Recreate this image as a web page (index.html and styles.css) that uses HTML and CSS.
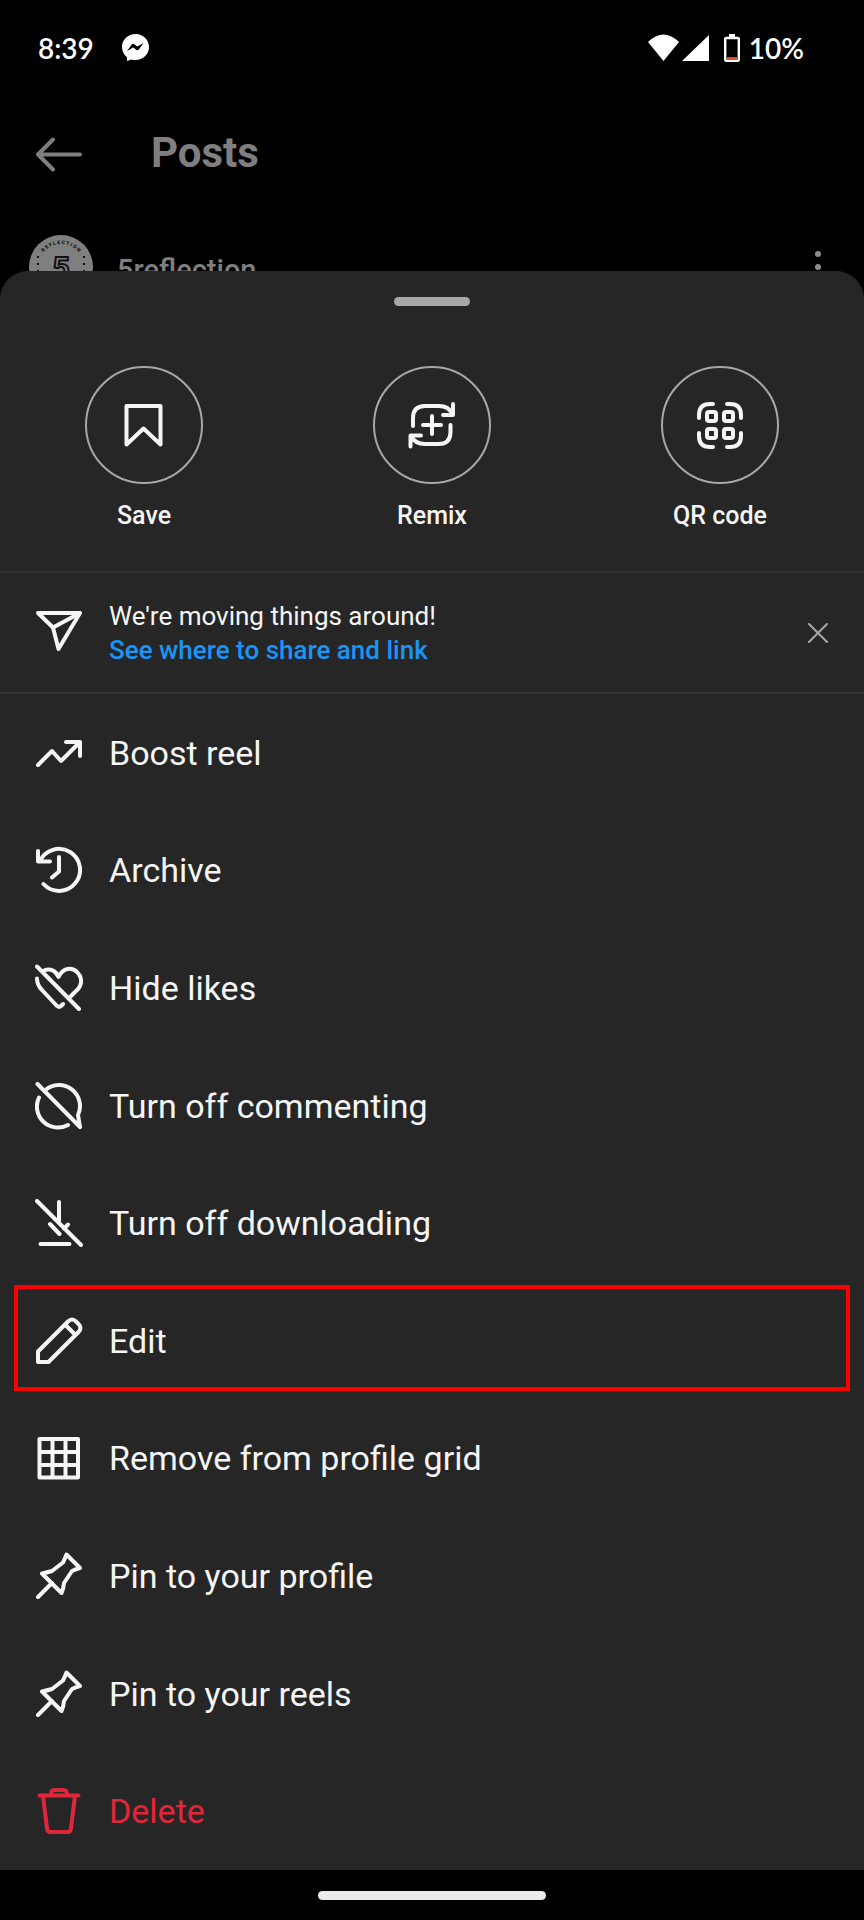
FILE: index.html
```html
<!DOCTYPE html>
<html lang="en">
<head>
  <meta charset="UTF-8">
  <meta name="viewport" content="width=device-width, initial-scale=1.0">
  <title>Posts</title>
  <link rel="stylesheet" href="styles.css">
</head>
<body>
  <div class="status-bar">
    <span class="time">8:39</span>
    <svg class="messenger" viewBox="0 0 27 27" aria-hidden="true">
      <path fill="#fff" d="M13.500 0C21 0 27 5.600 27 13S21 26 13.500 26c-1.500 0-2.800-.2-4-.6L5 27v-3.800C1.900 20.800 0 17.200 0 13 0 5.600 6 0 13.500 0z"/>
      <path fill="#000" d="M5 17l4.500-6.300q1.200-1.500 2.800-.4l3 2.300 6.200-3.600-4.500 6.300q-1.200 1.500-2.800.4l-3-2.300z"/>
    </svg>
    <div class="status-icons">
      <svg width="31" height="28" viewBox="0 0 31 28" aria-hidden="true"><path fill="#fff" d="M0 8Q15.500-7 31 8L15.500 27z"/></svg>
      <svg width="27" height="28" viewBox="0 0 27 28" aria-hidden="true"><path fill="#fff" d="M27 1v26H0z"/></svg>
      <svg class="battery" width="16" height="28" viewBox="0 0 16 28" aria-hidden="true">
        <path fill="#fff" d="M5 0h6v4H5z"/>
        <rect x="1.200" y="4" width="13.600" height="22.800" rx="1" fill="none" stroke="#fff" stroke-width="2.400"/>
        <path fill="#f0432f" d="M3 23h10v2.500H3z"/>
      </svg>
      <span>10%</span>
    </div>
  </div>

  <header class="app-bar">
    <button class="back" aria-label="Back">
      <svg class="icon" viewBox="0 0 48 48"><path d="M18 11.500L3 26.500l15 15M3 26.500h42"/></svg>
    </button>
    <h1>Posts</h1>
  </header>

  <div class="post">
    <svg class="avatar" viewBox="0 0 64 64" aria-hidden="true">
      <circle cx="32" cy="32" r="32" fill="#7f7f7f"/>
      <path id="ring" fill="none" d="M9 32a23 23 0 0 1 46 0"/>
      <path fill="none" stroke="#111" stroke-width="2" stroke-dasharray="2 5" d="M9 37V18M55 37V18"/>
      <text class="avatar-ring"><textPath href="#ring" startOffset="50%" text-anchor="middle">R E F L E C T I O N</textPath></text>
      <text class="avatar-five" x="32" y="43" text-anchor="middle">5</text>
    </svg>
    <span class="username">5reflection</span>
    <button class="more" aria-label="More options">
      <svg width="8" height="34" viewBox="0 0 8 34"><circle cx="4" cy="4" r="3"/><circle cx="4" cy="17" r="3"/><circle cx="4" cy="30" r="3"/></svg>
    </button>
  </div>

  <main class="sheet">
    <div class="handle"></div>

    <div class="actions">
      <button class="action">
        <span class="circle"><svg class="icon" viewBox="0 0 48 48"><path d="M6.500 5h34v38.500l-17-16-17 16z"/></svg></span>
        Save
      </button>
      <button class="action">
        <span class="circle"><svg class="icon" viewBox="0 0 48 48"><path d="M5 25v-8Q5 5 17 5h14q10 0 13 8M45 3v11H35M42.500 24v7q0 12-12 12H17Q7 43 3 35M2.500 45.500v-11H13M24 15v18M15 24h18"/></svg></span>
        Remix
      </button>
      <button class="action">
        <span class="circle"><svg class="icon" viewBox="0 0 48 48"><path d="M3 17v-3Q3 3 14 3h3M31 3h3q11 0 11 11v3M45 32v3q0 11-11 11h-3M17 46h-3Q3 46 3 35v-3"/><rect x="11" y="11" width="9" height="9" rx="2"/><rect x="28" y="11" width="9" height="9" rx="2"/><rect x="11" y="28" width="9" height="9" rx="2"/><rect x="28" y="28" width="9" height="9" rx="2"/></svg></span>
        QR code
      </button>
    </div>

    <div class="banner">
      <svg class="icon" viewBox="0 0 48 48" aria-hidden="true"><path d="M3 4h42L23.500 40 18 18.500zM18 18.500L45 4"/></svg>
      <div class="banner-text">
        <p>We're moving things around!</p>
        <a href="#">See where to share and link</a>
      </div>
      <button class="close" aria-label="Dismiss">
        <svg width="20" height="20" viewBox="0 0 20 20"><path d="M1 1l18 18M19 1L1 19"/></svg>
      </button>
    </div>

    <ul class="menu">
      <li><button>
        <svg class="icon" viewBox="0 0 48 48"><path d="M3 36l14-14 9 10 19-19M31 13h14v14"/></svg>
        Boost reel
      </button></li>
      <li><button>
        <svg class="icon" viewBox="0 0 48 48"><path d="M4.800 15.500A21 21 0 1 1 8.500 38M3 5v10.500h12M24 11v14.500l-7 6"/></svg>
        Archive
      </button></li>
      <li><button>
        <svg class="icon" viewBox="0 0 48 48"><path d="M2 2.500L44 45M9 6.500c6-2.500 12 0 14.500 6.500C28 3.500 37 3 42 8c6 6 5.500 14-2 20l-4 4M2 14.500c0 5 1.500 8 5 11.500l14.500 15.500q2.500 2.500 4.500.5l2-2"/></svg>
        Hide likes
      </button></li>
      <li><button>
        <svg class="icon" viewBox="0 0 48 48"><path d="M2.500 2L45 45M10.500 8A21 21 0 0 1 43 33L45 45M4 15.500A21 21 0 0 0 33 43"/></svg>
        Turn off commenting
      </button></li>
      <li><button>
        <svg class="icon" viewBox="0 0 48 48"><path d="M2 2l44 44M24 3v21M33 25.500l-4 4M15 25l9.500 10M5.500 45h29"/></svg>
        Turn off downloading
      </button></li>
      <li class="highlight"><button>
        <svg class="icon" viewBox="0 0 48 48"><path d="M3 45V34.500L33 4.500q4-4 8 0l2.500 2.500q4 4 0 8L13.500 45zM30.500 8l9.500 9.500"/></svg>
        Edit
      </button></li>
      <li><button>
        <svg class="icon" viewBox="0 0 48 48"><path d="M4.500 5h38.500v38.500H4.500zM17.500 5v38.500M30.500 5v38.500M4.500 18H43M4.500 31H43"/></svg>
        Remove from profile grid
      </button></li>
      <li><button>
        <svg class="icon" viewBox="0 0 48 48"><path d="M3 45l14-14M7 21.500q5-1 10-2.500l11-8.500q2-4 3.500-8L45 16q-4 1-8 3l-8 12q-.5 6-2.500 10z"/></svg>
        Pin to your profile
      </button></li>
      <li><button>
        <svg class="icon" viewBox="0 0 48 48"><path d="M3 45l14-14M7 21.500q5-1 10-2.500l11-8.500q2-4 3.500-8L45 16q-4 1-8 3l-8 12q-.5 6-2.500 10z"/></svg>
        Pin to your reels
      </button></li>
      <li class="danger"><button>
        <svg class="icon" viewBox="0 0 48 48"><path d="M4.500 8.500h39M8 8.500l4 33q.5 3.500 3.500 3.500h17q3 0 3.500-3.500l4-33M16 8.500V7q0-4 4-4h8q4 0 4 4v1.500"/></svg>
        Delete
      </button></li>
    </ul>
  </main>

  <div class="nav-bar"><div class="home"></div></div>
</body>
</html>
```
FILE: styles.css
```css
* {
  box-sizing: border-box;
}
body {
  margin: 0;
  min-height: 100vh;
  display: flex;
  flex-direction: column;
  background-color: #000;
  color: #f5f5f5;
  font-family: Roboto, "Liberation Sans", sans-serif;
}
button {
  padding: 0;
  border: none;
  background: none;
  color: inherit;
  font: inherit;
  cursor: pointer;
}
svg {
  display: block;
  flex-shrink: 0;
}
h1, p, ul {
  margin: 0;
}
.icon {
  width: 48px;
  height: 48px;
  fill: none;
  stroke: currentColor;
  stroke-width: 4;
  stroke-linecap: round;
  stroke-linejoin: round;
}

/* status bar */
.status-bar {
  display: flex;
  align-items: center;
  height: 95px;
  padding: 0 60px 0 38px;
  color: #fff;
  font-family: Lato, sans-serif;
  font-size: 28px;
  font-weight: 600;
}
.messenger {
  width: 27px;
  height: 27px;
  margin-left: 28px;
}
.status-icons {
  display: flex;
  align-items: center;
  gap: 3px;
  margin-left: auto;
}
.battery {
  margin: 0 6px 0 12px;
}

/* dimmed page behind the sheet */
.app-bar {
  display: flex;
  align-items: center;
  gap: 68px;
  height: 114px;
  padding: 0 35px;
  color: #7f7f7f;
}
h1 {
  font-size: 42px;
  font-weight: 700;
}
.post {
  display: flex;
  align-items: center;
  padding: 26px 42px 0 29px;
  color: #7f7f7f;
}
.avatar {
  width: 64px;
  height: 64px;
}
.avatar-ring {
  font-size: 5px;
  font-weight: 700;
}
.avatar-five {
  font-size: 30px;
  font-weight: 700;
  fill: #7f7f7f;
  stroke: #111;
  stroke-width: 2;
}
.username {
  padding-top: 6px;
  margin-left: 24px;
  font-size: 29px;
  font-weight: 500;
}
.more {
  margin-left: auto;
}
.more svg {
  fill: #8c8c8c;
}

/* bottom sheet */
.sheet {
  position: relative;
  flex: 1;
  display: flex;
  flex-direction: column;
  margin-top: -28px;
  padding-top: 26px;
  border-radius: 28px 28px 0 0;
  background-color: #262626;
}
.handle {
  width: 76px;
  height: 9px;
  margin: 0 auto;
  border-radius: 5px;
  background-color: #a8a8a8;
}
.actions {
  display: grid;
  grid-template-columns: repeat(3, 1fr);
  padding: 60px 0 40px;
  border-bottom: 2px solid #303030;
}
.action {
  display: flex;
  flex-direction: column;
  align-items: center;
  gap: 17px;
  font-size: 25px;
  font-weight: 500;
  line-height: 30px;
}
.circle {
  display: flex;
  align-items: center;
  justify-content: center;
  width: 118px;
  height: 118px;
  border: 2px solid #a8a8a8;
  border-radius: 50%;
}
.banner {
  display: flex;
  align-items: center;
  gap: 26px;
  padding: 26px 36px 25px 35px;
  border-bottom: 2px solid #363636;
  font-size: 26px;
  line-height: 34px;
}
.banner a {
  color: #1a94f5;
  font-weight: 500;
  text-decoration: none;
}
.close {
  margin-left: auto;
}
.close svg {
  fill: none;
  stroke: #a8a8a8;
  stroke-width: 2;
  stroke-linecap: round;
}
.menu {
  flex: 1;
  display: flex;
  flex-direction: column;
  padding: 0;
  list-style: none;
}
.menu li {
  position: relative;
  flex: 1;
  display: flex;
}
.menu button {
  flex: 1;
  display: flex;
  align-items: center;
  gap: 26px;
  padding: 0 35px;
  font-size: 34px;
  text-align: left;
}
.highlight::after {
  content: "";
  position: absolute;
  inset: 3px 14px 9px;
  border: 4px solid #f00;
  pointer-events: none;
}
.danger {
  color: #e1263a;
}

/* system navigation */
.nav-bar {
  display: flex;
  align-items: center;
  justify-content: center;
  height: 50px;
}
.home {
  width: 228px;
  height: 9px;
  border-radius: 5px;
  background-color: #ebebeb;
}
```
